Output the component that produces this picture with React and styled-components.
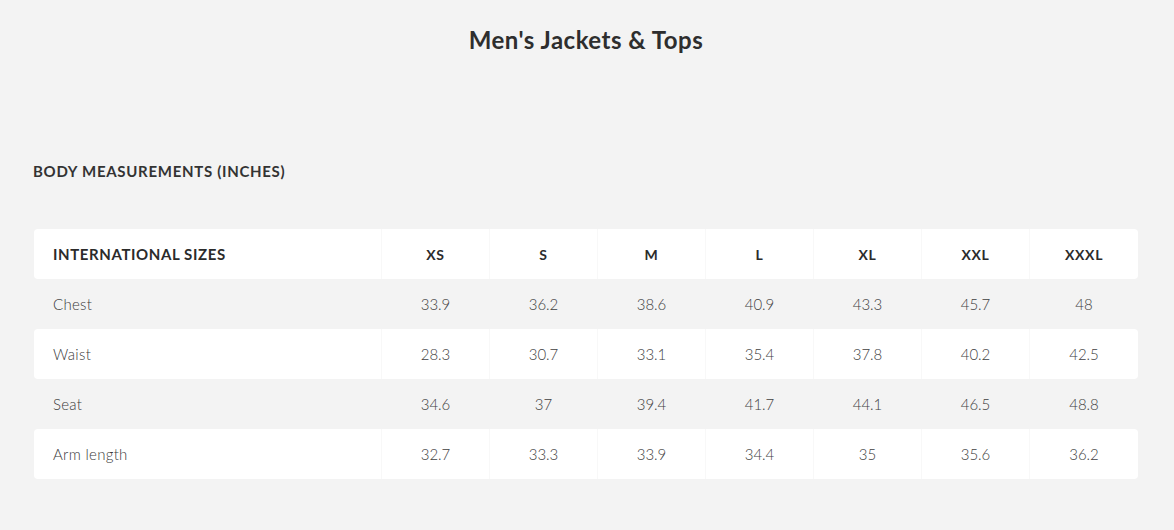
import React from "react";
import styled, { createGlobalStyle } from "styled-components";

const Global = createGlobalStyle`
  html, body { margin: 0; padding: 0; background: #f3f3f3; }
  body { font-family: Lato, "Open Sans", sans-serif; color: #333; }
`;

const Page = styled.div`
  width: 1174px;
  height: 530px;
  box-sizing: border-box;
  padding: 25px 36px 0 34px;
  background: #f3f3f3;
`;

const Title = styled.h1`
  margin: 0;
  text-align: center;
  font-size: 24px;
  font-weight: 700;
  letter-spacing: 0.5px;
  color: #2e2e2e;
  line-height: 30px;
`;

const Section = styled.h2`
  margin: 106px 0 0 -1px;
  font-size: 15px;
  font-weight: 700;
  letter-spacing: 0.7px;
  color: #333;
  line-height: 20px;
`;

const Table = styled.table`
  margin-top: 48px;
  width: 1104px;
  border-collapse: separate;
  border-spacing: 0;
  table-layout: fixed;
`;

const Row = styled.tr`
  height: 50px;
  background: ${(p) => (p.$white ? "#ffffff" : "transparent")};
  & > *:first-child { border-radius: 4px 0 0 4px; }
  & > *:last-child { border-radius: 0 4px 4px 0; }
`;

const LabelCell = styled.td`
  width: 348px;
  box-sizing: border-box;
  padding: 0 0 0 19px;
  text-align: left;
  font-size: 15px;
  font-weight: ${(p) => (p.$head ? 700 : 300)};
  letter-spacing: ${(p) => (p.$head ? "0.6px" : "0.3px")};
  color: ${(p) => (p.$head ? "#2b2b2b" : "#3a3a3a")};
  border-right: 1px solid ${(p) => (p.$white ? "#f8f8f8" : "transparent")};
`;

const ValueCell = styled.td`
  width: 108px;
  box-sizing: border-box;
  padding: 0;
  text-align: center;
  font-size: ${(p) => (p.$head ? "14px" : "15px")};
  font-weight: ${(p) => (p.$head ? 700 : 300)};
  letter-spacing: ${(p) => (p.$head ? "0.7px" : "0")};
  color: ${(p) => (p.$head ? "#2b2b2b" : "#3f3f3f")};
  border-right: 1px solid ${(p) => (p.$white ? "#f8f8f8" : "transparent")};
  &:last-child { border-right: none; }
`;

const sizes = ["XS", "S", "M", "L", "XL", "XXL", "XXXL"];
const rows = [
  ["Chest", "33.9", "36.2", "38.6", "40.9", "43.3", "45.7", "48"],
  ["Waist", "28.3", "30.7", "33.1", "35.4", "37.8", "40.2", "42.5"],
  ["Seat", "34.6", "37", "39.4", "41.7", "44.1", "46.5", "48.8"],
  ["Arm length", "32.7", "33.3", "33.9", "34.4", "35", "35.6", "36.2"],
];

export default function App() {
  return (
    <>
      <Global />
      <Page>
        <Title>Men's Jackets &amp; Tops</Title>
        <Section>BODY MEASUREMENTS (INCHES)</Section>
        <Table>
          <tbody>
            <Row $white>
              <LabelCell $head $white>INTERNATIONAL SIZES</LabelCell>
              {sizes.map((s) => (
                <ValueCell key={s} $head $white>{s}</ValueCell>
              ))}
            </Row>
            {rows.map((r, i) => {
              const white = i % 2 === 1;
              return (
                <Row key={r[0]} $white={white}>
                  <LabelCell $white={white}>{r[0]}</LabelCell>
                  {r.slice(1).map((v, j) => (
                    <ValueCell key={j} $white={white}>{v}</ValueCell>
                  ))}
                </Row>
              );
            })}
          </tbody>
        </Table>
      </Page>
    </>
  );
}
